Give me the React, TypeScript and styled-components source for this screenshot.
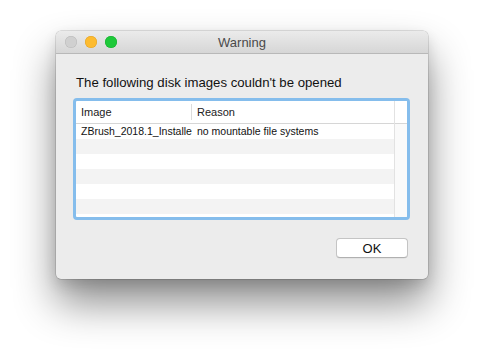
import React from "react";
import styled, { createGlobalStyle } from "styled-components";

const Global = createGlobalStyle`
  html, body { margin: 0; padding: 0; background: #ffffff; }
  body { font-family: "Liberation Sans", Arial, sans-serif; }
`;

const Stage = styled.div`
  width: 484px;
  height: 359px;
  padding: 31px 0 0 56px;
  box-sizing: border-box;
  overflow: hidden;
`;

const Window = styled.div`
  width: 372px;
  height: 248px;
  background: #ececec;
  border-radius: 5px;
  box-shadow: 0 0 0 0.5px rgba(0,0,0,0.22), 0 24px 42px rgba(0,0,0,0.45), 0 6px 14px rgba(0,0,0,0.12);
  display: flex;
  flex-direction: column;
  overflow: hidden;
`;

const TitleBar = styled.div`
  height: 22px;
  flex: none;
  background: linear-gradient(#ebebeb, #d6d6d6);
  border-bottom: 1px solid #b8b8b8;
  display: grid;
  grid-template-columns: 60px 1fr 60px;
  align-items: center;
  padding: 0 9px;
`;

const Lights = styled.div`
  display: flex;
  gap: 8px;
`;

const Light = styled.span<{ $c: string; $b: string }>`
  width: 12px;
  height: 12px;
  border-radius: 50%;
  background: ${(p) => p.$c};
  box-shadow: inset 0 0 0 0.5px ${(p) => p.$b};
`;

const Title = styled.div`
  text-align: center;
  font-size: 13px;
  color: #4a4a4a;
`;

const Body = styled.div`
  flex: 1;
  padding: 21px 20px 0 20px;
  display: flex;
  flex-direction: column;
`;

const Message = styled.div`
  font-size: 13.2px;
  color: #111;
  line-height: 16px;
  height: 16px;
`;

const TableFrame = styled.div`
  margin-top: 7px;
  margin-left: -3px;
  width: 331px;
  height: 116px;
  border: 3px solid #85bdec;
  border-radius: 4px;
  background: #ffffff;
  display: flex;
  overflow: hidden;
`;

const TableMain = styled.div`
  flex: 1;
  display: flex;
  flex-direction: column;
`;

const HeaderRow = styled.div`
  height: 22px;
  flex: none;
  display: grid;
  grid-template-columns: 116px 1fr;
  border-bottom: 1px solid #d6d6d6;
  font-size: 11px;
  color: #222;
`;

const HeaderCell = styled.div<{ $sep?: boolean }>`
  display: flex;
  align-items: center;
  padding-left: 5px;
  ${(p) => (p.$sep ? "border-right: 1px solid #dcdcdc; margin: 3px 0;" : "")}
`;

const Row = styled.div<{ $alt: boolean }>`
  height: 15px;
  flex: none;
  display: grid;
  grid-template-columns: 116px 1fr;
  background: ${(p) => (p.$alt ? "#f3f3f3" : "#ffffff")};
  font-size: 10.5px;
  color: #111;
  line-height: 15px;
`;

const Cell = styled.div`
  padding-left: 5px;
  white-space: nowrap;
  overflow: hidden;
`;

const ScrollCol = styled.div`
  width: 12px;
  flex: none;
  border-left: 1px solid #e2e2e2;
  background: #fafafa;
  display: flex;
  flex-direction: column;
`;

const ScrollHead = styled.div`
  height: 22px;
  background: #ffffff;
  border-bottom: 1px solid #d6d6d6;
`;

const Footer = styled.div`
  display: flex;
  justify-content: flex-end;
  margin-top: 18px;
`;

const Button = styled.button`
  width: 72px;
  height: 20px;
  background: #ffffff;
  border: 1px solid #c4c4c4;
  border-bottom-color: #b0b0b0;
  border-radius: 4px;
  font-family: "Liberation Sans", Arial, sans-serif;
  font-size: 13px;
  color: #111;
  padding: 0;
  box-shadow: 0 0.5px 0.5px rgba(0,0,0,0.08);
`;

const rows = [
  ["ZBrush_2018.1_Installe", "no mountable file systems"],
  ["", ""],
  ["", ""],
  ["", ""],
  ["", ""],
  ["", ""],
];

export default function App() {
  return (
    <Stage>
      <Global />
      <Window>
        <TitleBar>
          <Lights>
            <Light $c="#d0d0d0" $b="#b8b8b8" />
            <Light $c="#fdbb2f" $b="#e0a125" />
            <Light $c="#1ec93a" $b="#14ad2b" />
          </Lights>
          <Title>Warning</Title>
          <div />
        </TitleBar>
        <Body>
          <Message>The following disk images couldn't be opened</Message>
          <TableFrame>
            <TableMain>
              <HeaderRow>
                <HeaderCell $sep>Image</HeaderCell>
                <HeaderCell>Reason</HeaderCell>
              </HeaderRow>
              {rows.map((r, i) => (
                <Row key={i} $alt={i % 2 === 1}>
                  <Cell>{r[0]}</Cell>
                  <Cell>{r[1]}</Cell>
                </Row>
              ))}
            </TableMain>
            <ScrollCol>
              <ScrollHead />
            </ScrollCol>
          </TableFrame>
          <Footer>
            <Button>OK</Button>
          </Footer>
        </Body>
      </Window>
    </Stage>
  );
}
